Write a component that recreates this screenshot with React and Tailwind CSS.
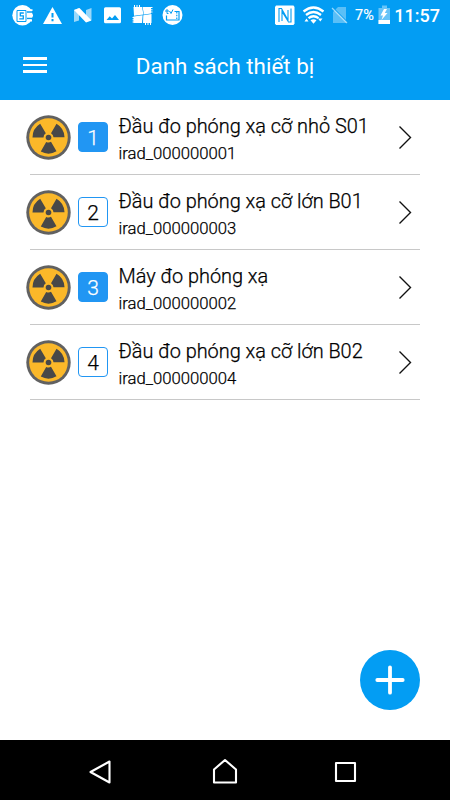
const devices = [
  { n: 1, name: 'Đầu đo phóng xạ cỡ nhỏ S01', id: 'irad_000000001', active: true },
  { n: 2, name: 'Đầu đo phóng xạ cỡ lớn B01', id: 'irad_000000003', active: false },
  { n: 3, name: 'Máy đo phóng xạ', id: 'irad_000000002', active: true },
  { n: 4, name: 'Đầu đo phóng xạ cỡ lớn B02', id: 'irad_000000004', active: false },
];

function Radiation() {
  const blade = 'M-16 0A16 16 0 0 1 -8.3 -13.7L-2.7 -4.2A5 5 0 0 0 -5 0Z';
  return (
    <svg className="-ml-1 size-[45px] shrink-0" viewBox="-22.5 -22.5 45 45">
      <circle r="22.2" fill="#616161" />
      <circle r="19.3" fill="#fbb829" />
      <g fill="#484848">
        <path d={blade} />
        <path d={blade} transform="rotate(120)" />
        <path d={blade} transform="rotate(240)" />
        <circle r="2.8" />
      </g>
    </svg>
  );
}

function StatusBar() {
  return (
    <div className="flex h-8 items-center pl-3 pr-[10px] text-white">
      <svg className="h-8 w-[174px]" viewBox="12 0 174 32" fill="#fff">
        <circle cx="22.5" cy="15.3" r="10.2" />
        <path d="M27 12H34M27 18.5H34" stroke="#039df3" strokeWidth="1.4" />
        <path d="M27 10.2H32.5M27 15.5H33M27 20.5H32" stroke="#fff" strokeWidth="1.8" />
        <path d="M17 10.5H26V21.5H17Z" stroke="#039df3" strokeWidth="1" />
        <path d="M23.8 13H20.3V15.8H23.3V18.8H19.3" fill="none" stroke="#039df3" strokeWidth="1.3" />
        <path d="M52.5 7L62 24H43Z" />
        <path d="M52.5 13V17.5M52.5 19V21.2" stroke="#039df3" strokeWidth="2" />
        <path d="M74 10L79 8V20.5L74 22ZM86 10L91.5 8V20L86 22Z" opacity=".6" />
        <path d="M74 10L79.5 8L91.5 20.5L86 22.5Z" />
        <path d="M105.5 7.2H119.5A1.5 1.5 0 0 1 121 8.7V21.7A1.5 1.5 0 0 1 119.5 23.2H105.5A1.5 1.5 0 0 1 104 21.7V8.7A1.5 1.5 0 0 1 105.5 7.2Z" />
        <path d="M106.5 20L109.7 16.2L112 18.5L115 15L119 20Z" fill="#039df3" />
        <path d="M133.5 7H142L143.5 14.5L134 15.8ZM142.6 7H151V13.4L144 14.4ZM133.5 16.4L142.6 15.3L142 23H133.5ZM143.3 15.2L151.5 14V23H143Z" />
        <path d="M134.5 5V8M137 5V8M139.5 5V8M150 7.5H152.5M150 9.8H152.5M150 12H152.5M132.5 17.5H135M132.5 19.8H135M132.5 22H135M145.5 22V25M148 22V25M150.5 22V25" stroke="#fff" />
        <circle cx="172.5" cy="15" r="10" />
        <path d="M174.5 11.5H179V20H166.5V15.5" fill="none" stroke="#039df3" strokeWidth="1.2" />
        <path d="M165 11H169M167 9V13.5H168.5M169.5 11L171 13.5L173 9.5" fill="none" stroke="#039df3" strokeWidth="1" />
        <path d="M176.8 12V20" stroke="#039df3" strokeWidth="1.2" strokeDasharray="1.5 1.2" />
      </svg>
      <svg className="ml-[87px] h-8 w-[77px]" viewBox="273 0 77 32" fill="none" stroke="#fff">
        <path d="M276 5.5H293.5L294.5 7V23.5L293.5 25H276L275 23.5V7Z" fill="#fff" stroke="none" />
        <path d="M279 22V8.5H281.5L288 20V10M291 8.5V22H288.5L282 11.5V21" stroke="#039df3" strokeWidth="1.1" />
        <g strokeWidth="2.3">
          <path d="M303.5 11.5Q313.5 3.5 323.5 11.5" />
          <path d="M306 15Q313.5 9 321 15" />
          <path d="M308.5 18.2Q313.5 14.2 318.5 18.2" />
        </g>
        <path d="M310.5 20.3Q313.5 18.3 316.5 20.3L313.5 23.8ZM304.5 21.5H308.5L306.5 18.5ZM318 18.5H322.5L320.3 21.5Z" fill="#fff" stroke="none" />
        <path d="M338 7H346V23H333V12Z" fill="#fff" stroke="none" opacity=".35" />
        <path d="M332 7L348 23" stroke="#039df3" strokeWidth="1.5" />
        <path d="M332 8L347 23" strokeWidth="1.2" opacity=".6" />
      </svg>
      <span className="ml-[5px] w-[20px] text-[14.5px] [-webkit-text-stroke:0.15px_white]">7%</span>
      <svg className="ml-[3px] h-8 w-[13px]" viewBox="378 0 13 32">
        <path d="M378.5 8H382V5.5H387V8H390V24H378.5Z" fill="#fff" opacity=".4" />
        <path d="M378.5 20H390V24H378.5Z" fill="#fff" />
        <path d="M384 9L380.5 15.5H383L381.5 20L387.5 13H384.8L387 9Z" fill="#fff" />
      </svg>
      <span className="ml-auto -mt-0.5 text-[18px] font-medium">11:57</span>
    </div>
  );
}

export default function App() {
  return (
    <div className="flex h-[800px] w-[450px] flex-col overflow-hidden bg-white font-['Roboto','Noto_Sans',sans-serif]">
      <header className="h-[100px] shrink-0 bg-[#039df3]">
        <StatusBar />
        <div className="flex h-[68px] items-center px-[23px] text-white">
          <button className="-mt-0.5 flex w-6 flex-col gap-1" aria-label="Menu">
            <span className="h-[2.6px] bg-white" />
            <span className="h-[2.6px] bg-white" />
            <span className="h-[2.6px] bg-white" />
          </button>
          <h1 className="flex-1 pt-0.5 pr-6 text-center text-[22.4px] whitespace-nowrap">Danh sách thiết bị</h1>
        </div>
      </header>
      <main className="flex flex-1 flex-col px-[30px]">
        {devices.map((d) => (
          <div key={d.n} className="flex h-[75px] items-center border-b border-[#c8c8c8]">
            <Radiation />
            <span
              className={`ml-[7px] flex size-[30px] shrink-0 items-center justify-center rounded-[4px] border-[1.5px] border-[#2196f3] pt-[3px] text-[21px] font-light [-webkit-text-stroke:0.25px] ${
                d.active ? 'bg-[#2196f3] text-white' : 'bg-white text-black'
              }`}
            >
              {d.n}
            </span>
            <div className="ml-[10.5px] flex-1 pt-[6px] whitespace-nowrap text-black [-webkit-text-stroke:0.25px]">
              <div className="text-[19.9px] leading-7 font-light">{d.name}</div>
              <div className="text-[16.7px] leading-[26px] font-light">{d.id}</div>
            </div>
            <svg className="mr-2 h-6 w-[14px]" viewBox="0 0 14 24" fill="none" stroke="#111" strokeWidth="1.4">
              <path d="M1.5 1.5L12.5 12.5L1.5 23.5" />
            </svg>
          </div>
        ))}
        <button className="mt-auto mb-[30px] flex size-[60px] items-center justify-center self-end rounded-full bg-[#039df3]" aria-label="Add">
          <svg className="size-[30px]" viewBox="0 0 30 30" stroke="#fff" strokeWidth="3.8" strokeLinecap="round">
            <path d="M15 2.3V27.7M2.3 15H27.7" />
          </svg>
        </button>
      </main>
      <nav className="flex h-[60px] shrink-0 items-center bg-black pr-[93px] pl-[88px]">
        <svg className="h-[60px] w-full" viewBox="88 740 269 60" fill="none" stroke="#fff" strokeWidth="2.1" strokeLinejoin="round">
          <path d="M109.5 761.5V782.5L90.5 772Z" />
          <path d="M214 782.5V769.5L225 760L236 769.5V782.5Z" />
          <path d="M336 763H355V781H336Z" />
        </svg>
      </nav>
    </div>
  );
}
